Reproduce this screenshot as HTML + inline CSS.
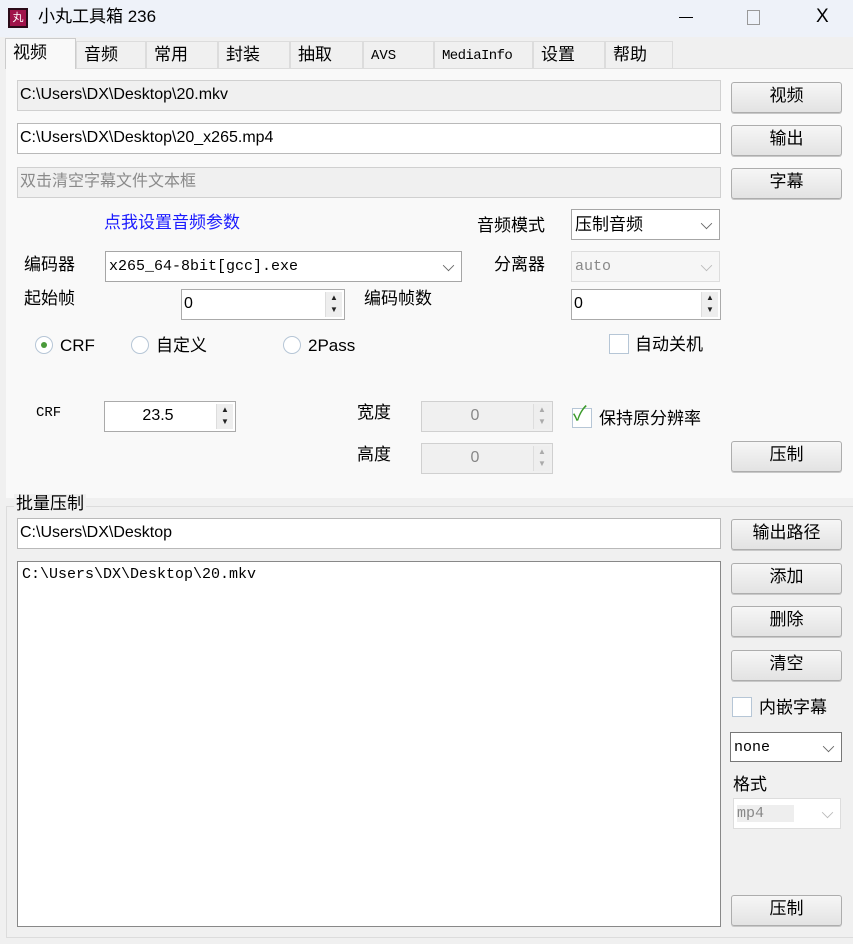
<!DOCTYPE html>
<html><head><meta charset="utf-8">
<style>
*{box-sizing:border-box;margin:0;padding:0}
body{width:853px;height:944px;background:#f0f0f0;font-family:"Liberation Sans","Noto Sans CJK SC",sans-serif;font-size:16px;line-height:1.15;color:#000;position:relative;overflow:hidden}
.a{position:absolute;white-space:nowrap}
.tb{position:absolute;left:0;top:0;width:853px;height:37px;background:#eef2f9}
.tab{position:absolute;top:41px;height:27px;border:1px solid #dcdcdc;border-bottom:none;background:#f0f0f0;font-size:17px;padding:3px 0 0 7px}
.panel{position:absolute;left:6px;top:68px;width:847px;height:430px;background:#f9f9f9;border-top:1px solid #dcdcdc}
.in{position:absolute;height:31px;border:1px solid #b9b9b9;background:#fff;font-size:16px;padding:5px 0 0 2px;color:#000}
.gray{background:#f0f0f0;border-color:#d0d0d0}
.btn{position:absolute;width:111px;height:31px;border:1px solid #adadad;border-radius:3px;background:linear-gradient(#f6f6f6,#e3e3e3);text-align:center;font-size:17px;padding-top:3px;box-shadow:0 1px 0 #c8c8c8}
.mono{font-family:"Liberation Mono","Noto Sans CJK SC",monospace}
.cb{position:absolute;border:1px solid #a6a6a6;background:#fff;height:31px;font-size:15px;padding:6px 0 0 3px}
.arrow{position:absolute;right:8px;top:9px;width:9px;height:9px;border-right:1.3px solid #666;border-bottom:1.3px solid #666;transform:rotate(45deg) scale(.9,.9)}
.spin{position:absolute;right:2px;top:2px;width:17px;height:25px;background:#eee;border-left:1px solid #ddd;font-size:8px;line-height:12px;text-align:center;color:#222}
.chk{position:absolute;width:20px;height:20px;border:1px solid #b6c6d6;background:#fff}
.rad{position:absolute;width:18px;height:18px;border-radius:50%;border:1px solid #b6c6d6;background:#fff}
</style></head><body>
<div class="tb"></div>
<div class="a" style="left:8px;top:8px;width:20px;height:20px;background:#a0134a;border:2px solid #2a0a18;color:#fff;font-size:11px;text-align:center;line-height:16px">丸</div>
<div class="a" style="left:38px;top:7px;font-size:17px">小丸工具箱 236</div>
<div class="a" style="left:679px;top:17px;width:14px;height:1px;background:#000"></div>
<div class="a" style="left:747px;top:10px;width:13px;height:15px;border:1px solid #999"></div>
<div class="a" style="left:816px;top:6px;font-size:19px;font-weight:300">X</div>

<div class="panel"></div>
<div class="tab" style="left:5px;top:38px;width:71px;height:31px;background:#f9f9f9;border-color:#ccc;padding-top:4px">视频</div>
<div class="tab" style="left:76px;width:70px">音频</div>
<div class="tab" style="left:146px;width:72px">常用</div>
<div class="tab" style="left:218px;width:72px">封装</div>
<div class="tab" style="left:290px;width:73px">抽取</div>
<div class="tab mono" style="left:363px;width:71px;font-size:14px;padding-top:6px">AVS</div>
<div class="tab mono" style="left:434px;width:99px;font-size:14px;padding-top:6px;letter-spacing:-0.6px">MediaInfo</div>
<div class="tab" style="left:533px;width:72px">设置</div>
<div class="tab" style="left:605px;width:68px">帮助</div>

<div class="in gray" style="left:17px;top:80px;width:704px">C:\Users\DX\Desktop\20.mkv</div>
<div class="btn" style="left:731px;top:82px">视频</div>
<div class="in" style="left:17px;top:123px;width:704px">C:\Users\DX\Desktop\20_x265.mp4</div>
<div class="btn" style="left:731px;top:125px">输出</div>
<div class="in gray" style="left:17px;top:167px;width:704px;color:#8a8a8a">双击清空字幕文件文本框</div>
<div class="btn" style="left:731px;top:168px">字幕</div>

<div class="a" style="left:104px;top:213px;color:#1a1aff;font-size:17px">点我设置音频参数</div>
<div class="a" style="left:477px;top:216px;font-size:17px">音频模式</div>
<div class="cb" style="left:571px;top:209px;width:149px;font-size:17px;padding-top:5px">压制音频<div class="arrow"></div></div>
<div class="a" style="left:24px;top:255px;font-size:17px">编码器</div>
<div class="cb mono" style="left:105px;top:251px;width:357px">x265_64-8bit[gcc].exe<div class="arrow"></div></div>
<div class="a" style="left:494px;top:255px;font-size:17px">分离器</div>
<div class="cb mono" style="left:571px;top:251px;width:149px;background:#f6f6f6;border-color:#ddd;color:#888">auto<div class="arrow" style="border-color:#bbb"></div></div>

<div class="a" style="left:24px;top:289px;font-size:17px">起始帧</div>
<div class="in" style="left:181px;top:289px;width:164px;border-color:#aaa">0<div class="spin">▲<br>▼</div></div>
<div class="a" style="left:364px;top:289px;font-size:17px">编码帧数</div>
<div class="in" style="left:571px;top:289px;width:150px;border-color:#aaa">0<div class="spin">▲<br>▼</div></div>

<div class="rad" style="left:35px;top:336px"><div style="position:absolute;left:5px;top:5px;width:6px;height:6px;border-radius:50%;background:#4a9a3a"></div></div>
<div class="a" style="left:60px;top:336px;font-size:17px">CRF</div>
<div class="rad" style="left:131px;top:336px"></div>
<div class="a" style="left:156px;top:336px;font-size:17px">自定义</div>
<div class="rad" style="left:283px;top:336px"></div>
<div class="a" style="left:308px;top:336px;font-size:17px">2Pass</div>
<div class="chk" style="left:609px;top:334px"></div>
<div class="a" style="left:635px;top:335px;font-size:17px">自动关机</div>

<div class="a mono" style="left:36px;top:405px;font-size:14px">CRF</div>
<div class="in" style="left:104px;top:401px;width:132px;border-color:#aaa;text-align:center;padding-right:26px">23.5<div class="spin">▲<br>▼</div></div>
<div class="a" style="left:357px;top:403px;font-size:17px">宽度</div>
<div class="in gray" style="left:421px;top:401px;width:132px;text-align:center;padding-right:26px;color:#888">0<div class="spin" style="color:#aaa">▲<br>▼</div></div>
<div class="a" style="left:357px;top:445px;font-size:17px">高度</div>
<div class="in gray" style="left:421px;top:443px;width:132px;text-align:center;padding-right:26px;color:#888">0<div class="spin" style="color:#aaa">▲<br>▼</div></div>
<div class="chk" style="left:572px;top:408px"></div>
<div class="a" style="left:573px;top:403px;color:#3a9a2a;font-size:20px">✓</div>
<div class="a" style="left:599px;top:409px;font-size:17px">保持原分辨率</div>
<div class="btn" style="left:731px;top:441px">压制</div>

<div class="a" style="left:6px;top:506px;width:847px;height:432px;border:1px solid #dcdcdc;border-right:none"></div>
<div class="a" style="left:14px;top:494px;font-size:17px;background:#f0f0f0;padding:0 2px">批量压制</div>
<div class="in" style="left:17px;top:518px;width:704px">C:\Users\DX\Desktop</div>
<div class="btn" style="left:731px;top:519px">输出路径</div>
<div class="a mono" style="left:17px;top:561px;width:704px;height:366px;border:1px solid #888;background:#fff;font-size:15px;padding:4px 0 0 4px">C:\Users\DX\Desktop\20.mkv</div>
<div class="btn" style="left:731px;top:563px">添加</div>
<div class="btn" style="left:731px;top:606px">删除</div>
<div class="btn" style="left:731px;top:650px">清空</div>
<div class="chk" style="left:732px;top:697px"></div>
<div class="a" style="left:759px;top:698px;font-size:17px">内嵌字幕</div>
<div class="cb mono" style="left:730px;top:732px;width:112px;border-color:#777;height:30px;padding-top:6px">none<div class="arrow"></div></div>
<div class="a" style="left:733px;top:775px;font-size:17px">格式</div>
<div class="cb mono" style="left:733px;top:798px;width:108px;border-color:#ddd;color:#888;padding-top:6px"><span style="background:#eee;padding-right:30px">mp4</span><div class="arrow" style="border-color:#bbb"></div></div>
<div class="btn" style="left:731px;top:895px">压制</div>
</body></html>
